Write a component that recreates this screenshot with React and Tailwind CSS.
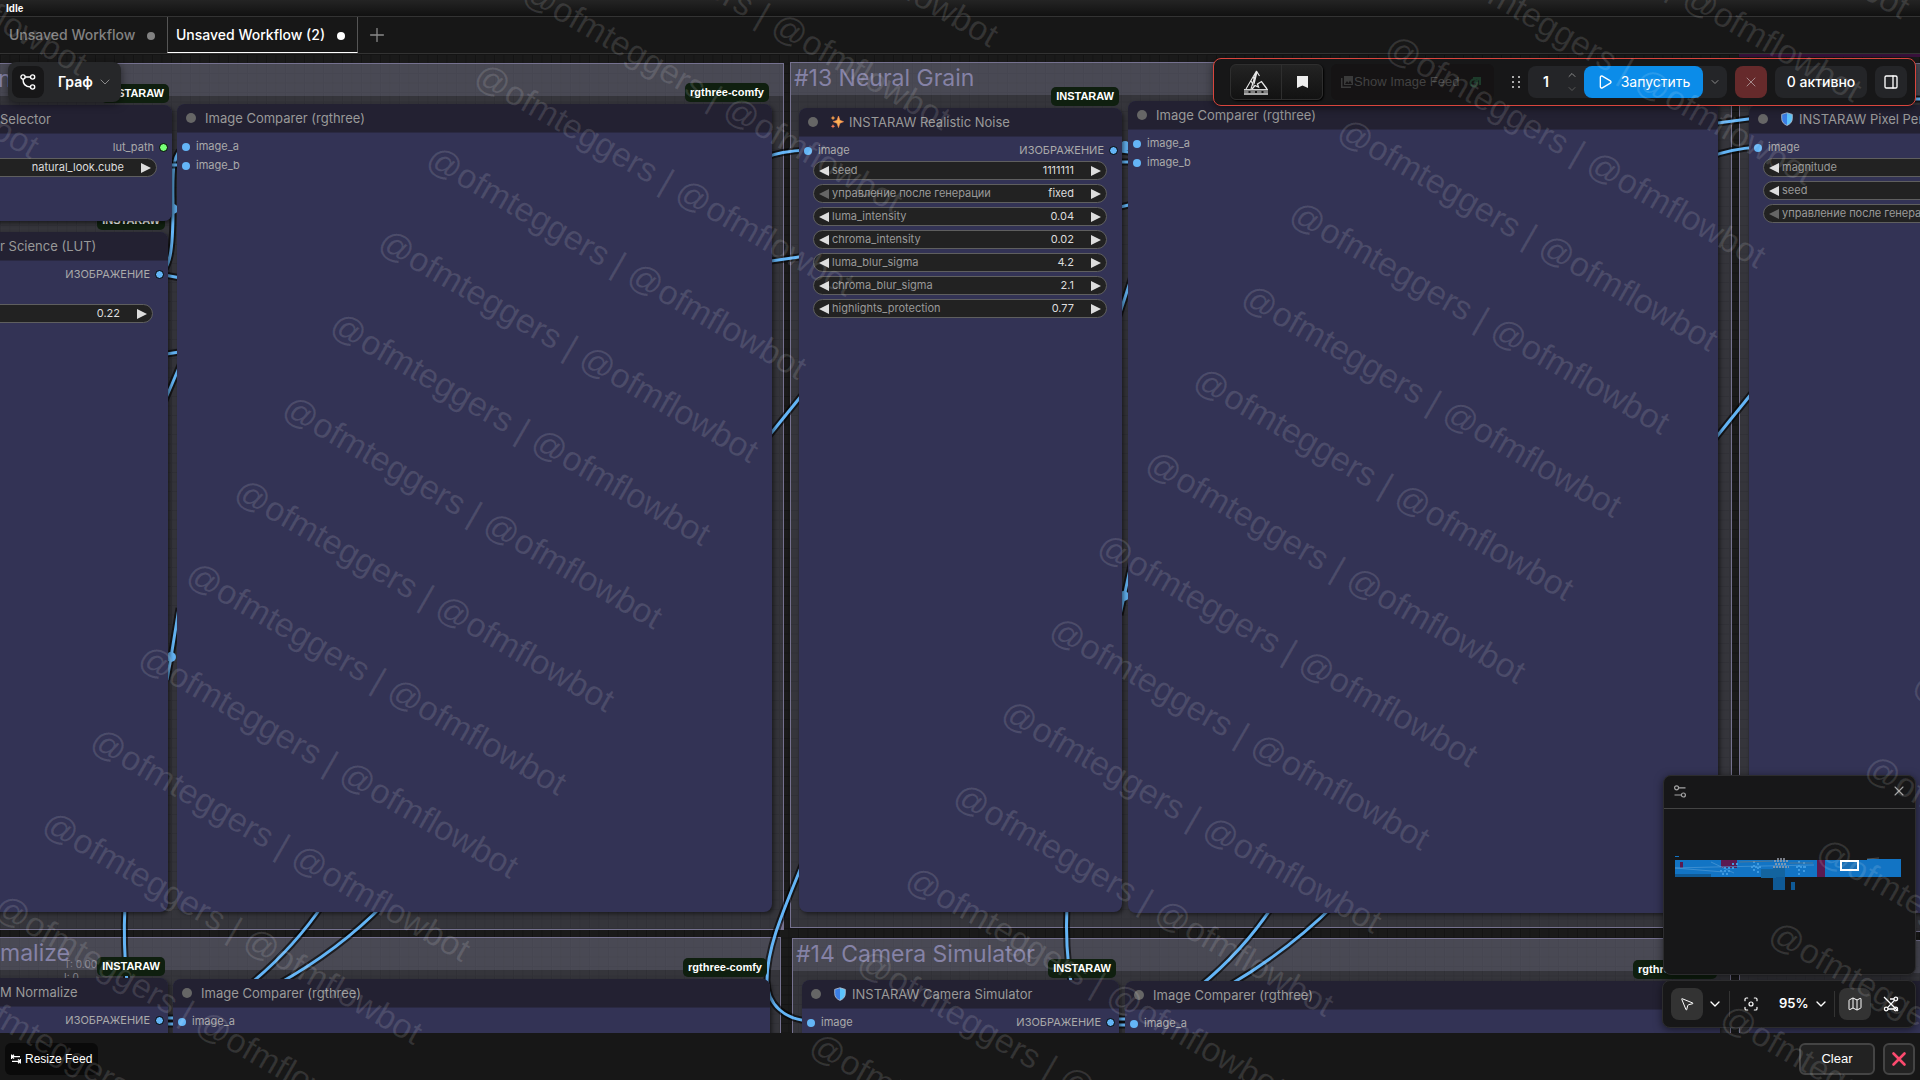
import React from 'react';
import {
  ChevronDown,
  ChevronUp,
  Focus,
  Map as MapIcon,
  MousePointer2,
  PanelRight,
  Play,
  Plus,
  X,
} from 'lucide-react';

const groups = [
  { title: 'nce', x: -6, y: 9, w: 790, h: 867 },
  { title: '#13 Neural Grain', x: 790, y: 8, w: 942, h: 866 },
  { title: '', x: 1739, y: 9, w: 260, h: 869 },
  { title: 'malize', x: -4, y: 883, w: 785, h: 300 },
  { title: '#14 Camera Simulator', x: 792, y: 884, w: 939, h: 300 },
  { title: '', x: 1739, y: 886, w: 260, h: 300 },
];

const nodes = [
  {
    id: 'lut', title: 'r Science (LUT)', x: -28, y: 178, w: 196, h: 680, badge: 'INSTARAW', slotRows: 2,
    outputs: [{ name: 'ИЗОБРАЖЕНИЕ' }],
    widgets: [{ name: '', value: '0.22' }],
  },
  {
    id: 'selector', title: 'Selector', x: -28, y: 51, w: 200, h: 116, badge: 'INSTARAW', slotRows: 1,
    outputs: [{ name: 'lut_path', green: true }],
    widgets: [{ name: '', value: 'natural_look.cube' }],
  },
  {
    id: 'comparer-1', title: 'Image Comparer (rgthree)', x: 177, y: 50, w: 595, h: 808, badge: 'rgthree-comfy', slotRows: 2,
    inputs: ['image_a', 'image_b'],
  },
  {
    id: 'noise', title: 'INSTARAW Realistic Noise', icon: 'sparkles', x: 799, y: 54, w: 323, h: 804, badge: 'INSTARAW', slotRows: 1,
    inputs: ['image'],
    outputs: [{ name: 'ИЗОБРАЖЕНИЕ' }],
    widgets: [
      { name: 'seed', value: '1111111' },
      { name: 'управление после генерации', value: 'fixed', first: true },
      { name: 'luma_intensity', value: '0.04' },
      { name: 'chroma_intensity', value: '0.02' },
      { name: 'luma_blur_sigma', value: '4.2' },
      { name: 'chroma_blur_sigma', value: '2.1' },
      { name: 'highlights_protection', value: '0.77' },
    ],
  },
  {
    id: 'comparer-2', title: 'Image Comparer (rgthree)', x: 1128, y: 47, w: 590, h: 812, slotRows: 2,
    inputs: ['image_a', 'image_b'],
  },
  {
    id: 'pixel', title: 'INSTARAW Pixel Perfect', icon: 'shield', x: 1749, y: 51, w: 323, h: 808, slotRows: 1,
    inputs: ['image'],
    widgets: [
      { name: 'magnitude', value: '' },
      { name: 'seed', value: '' },
      { name: 'управление после генерации', value: '', first: true },
    ],
  },
  {
    id: 'normalize', title: 'M Normalize', x: -28, y: 924, w: 196, h: 300, badge: 'INSTARAW', slotRows: 1,
    outputs: [{ name: 'ИЗОБРАЖЕНИЕ' }],
  },
  {
    id: 'comparer-3', title: 'Image Comparer (rgthree)', x: 173, y: 925, w: 597, h: 300, badge: 'rgthree-comfy', slotRows: 1,
    inputs: ['image_a'],
  },
  {
    id: 'camera', title: 'INSTARAW Camera Simulator', icon: 'shield', x: 802, y: 926, w: 317, h: 300, badge: 'INSTARAW', slotRows: 1,
    inputs: ['image'],
    outputs: [{ name: 'ИЗОБРАЖЕНИЕ' }],
  },
  {
    id: 'comparer-4', title: 'Image Comparer (rgthree)', x: 1125, y: 927, w: 595, h: 300, badge: 'rgthree-comfy', slotRows: 1,
    inputs: ['image_a'],
  },
  { id: 'tail', title: '', x: 1749, y: 927, w: 323, h: 300, slotRows: 1 },
];

const links = [
  'M159 274 C170 270 173 250 173 209 C173 180 170 152 186 146',
  'M159 165 H186',
  'M159 274 L186 279',
  'M160 355 L186 351',
  'M160 412 L184 356',
  'M179 608 L171 657 L167 680',
  'M764 158 Q780 151 808 150',
  'M764 262 L806 256',
  'M764 442 L806 390',
  'M806 855 C786 905 767 945 767 980 C767 1005 785 1020 811 1021',
  'M1112 150 L1137 153',
  'M1112 162 H1137',
  'M1112 209 L1137 203',
  'M1116 325 L1132 276',
  'M1132 560 L1120 615',
  'M1710 124 L1756 118',
  'M1710 157 Q1730 149 1758 147',
  'M1710 445 L1756 388',
  'M125 905 Q123 945 127 982',
  'M324 903 Q294 948 250 984',
  'M384 904 Q339 950 278 984',
  'M1067 905 Q1065 948 1071 982',
  'M1274 904 Q1244 950 1200 986',
  'M1335 904 Q1289 950 1228 986',
  'M160 1018 H180',
  'M160 1024 H180',
  'M1112 1019 H1132',
  'M1112 1025 H1132',
  'M1912 99 H1925',
];

const reroutes = [
  [173, 209],
  [171, 657],
  [1125, 146],
  [1124, 596],
];

const Links = () => (
  <svg className="absolute inset-0 w-full h-full" aria-hidden="true">
    <g transform="translate(0 -54)" fill="none">
      {links.map((d) => (
        <g key={d}>
          <path d={d} stroke="#000" strokeOpacity="0.6" strokeWidth="7" />
          <path d={d} stroke="#64b5f6" strokeWidth="3" />
        </g>
      ))}
      {reroutes.map(([x, y]) => (
        <circle key={y} cx={x} cy={y} r="5" fill="#64b5f6" />
      ))}
    </g>
  </svg>
);

const Grid = () => (
  <svg className="absolute inset-0 w-full h-full" aria-hidden="true">
    <defs>
      <pattern id="grid" width="9.5" height="9.5" patternUnits="userSpaceOnUse">
        <path d="M0 0.5 H9.5 M0.5 0 V9.5" stroke="#141414" strokeWidth="1" />
      </pattern>
    </defs>
    <rect width="100%" height="100%" fill="url(#grid)" />
  </svg>
);

const Group = ({ title, x, y, w, h }) => (
  <section
    className="absolute border border-[#75718f] bg-[#8886a0]/25"
    style={{ left: x, top: y, width: w, height: h }}
  >
    <h2 className="h-8 pl-[3px] bg-[#8886a0]/25 font-normal text-[23px] leading-[30px] text-[#8582a6] whitespace-nowrap">
      {title}
    </h2>
    <svg className="absolute right-0 bottom-0 w-2 h-2" viewBox="0 0 8 8">
      <path d="M8 0 V8 H0 Z" fill="#75718f" />
    </svg>
  </section>
);

const SparklesEmoji = () => (
  <svg className="w-[14px] h-[14px]" viewBox="0 0 14 14">
    <path d="M8.5 1 L9.9 5.3 L13.6 6.7 L9.9 8.2 L8.5 12.6 L7 8.2 L3.2 6.7 L7 5.3 Z" fill="#fbb254" stroke="#f98a55" strokeWidth="0.6" />
    <path d="M3 0.6 L3.7 2.3 L5.4 3 L3.7 3.7 L3 5.4 L2.3 3.7 L0.6 3 L2.3 2.3 Z" fill="#f9a04c" />
    <path d="M3 9 L3.6 10.6 L5.2 11.2 L3.6 11.9 L3 13.4 L2.4 11.9 L0.8 11.2 L2.4 10.6 Z" fill="#f57b57" />
  </svg>
);

const ShieldEmoji = () => (
  <svg className="w-[14px] h-[14px]" viewBox="0 0 14 14">
    <path d="M7 0.8 L12.3 2.4 V6.6 C12.3 10 10 12.3 7 13.4 Z" fill="#5cc3fb" />
    <path d="M7 0.8 L1.7 2.4 V6.6 C1.7 10 4 12.3 7 13.4 Z" fill="#3b7fe6" />
    <path d="M7 0.8 L12.3 2.4 V6.6 C12.3 10 10 12.3 7 13.4 C4 12.3 1.7 10 1.7 6.6 V2.4 Z" fill="none" stroke="#b8c6d8" strokeWidth="0.8" />
  </svg>
);

const Arrow = ({ left, dim }) => (
  <svg className={dim ? 'w-[10px] h-[10px] text-[#666]' : 'w-[10px] h-[10px] text-[#ddd]'} viewBox="0 0 10 10">
    <path d={left ? 'M10 0 V10 L0 5 Z' : 'M0 0 V10 L10 5 Z'} fill="currentColor" />
  </svg>
);

const Widget = ({ id, name, value, first }) => (
  <div className="h-[19px] px-[5px] flex items-center rounded-full bg-[#222] border border-[#5f5f5f] text-[11px]">
    {name && (
      <button aria-label={`${name} −`}>
        <Arrow left dim={first} />
      </button>
    )}
    <label htmlFor={id} className="pl-[3px] text-[#999] whitespace-nowrap">{name}</label>
    <input
      id={id}
      aria-label={name || value}
      defaultValue={value}
      className="flex-1 min-w-0 mr-[17px] bg-transparent text-right text-[#ddd] outline-none"
    />
    <button aria-label={`${name} +`}>
      <Arrow />
    </button>
  </div>
);

const Node = ({ id, title, icon, x, y, w, h, badge, slotRows, inputs = [], outputs = [], widgets = [] }) => (
  <article
    className="absolute rounded-lg bg-[#333355] shadow-[2px_2px_4px_rgba(0,0,0,0.5)]"
    style={{ left: x, top: y, width: w, height: h }}
  >
    {badge && (
      <span className="absolute -top-[21px] right-[3px] h-[19px] px-[5px] rounded-[5px] bg-[#0f1f0f] text-white font-['Liberation_Sans',sans-serif] text-[11px] leading-[19px] font-bold whitespace-nowrap">
        {badge}
      </span>
    )}
    <header className="h-[29px] pl-[9px] flex items-center rounded-t-lg bg-[#232132] border-b border-[#2a2942] text-[#999] text-[13px]">
      <span className="w-[10px] h-[10px] mr-[9px] shrink-0 rounded-full bg-[#666]"></span>
      {icon && (
        <span className="ml-[3px] mr-[5px]">
          {icon === 'sparkles' ? <SparklesEmoji /> : <ShieldEmoji />}
        </span>
      )}
      <h3 className="pt-[2px] whitespace-nowrap">{title}</h3>
    </header>
    <div className={slotRows === 2 ? 'h-[43px] pt-1 flex justify-between text-[11px] leading-[19px] text-[#aaa]' : 'h-6 pt-1 flex justify-between text-[11px] leading-[19px] text-[#aaa]'}>
      <ul className="pl-[5px]">
        {inputs.map((name) => (
          <li key={name} className="flex items-center gap-[6px]">
            <span className="w-2 h-2 rounded-full bg-[#64b5f6]"></span>
            {name}
          </li>
        ))}
      </ul>
      <ul className="pr-1">
        {outputs.map(({ name, green }) => (
          <li key={name} className="flex items-center gap-[5px]">
            {name}
            <span className={green ? 'w-[9px] h-[9px] rounded-full border border-black bg-[#77ff77]' : 'w-[9px] h-[9px] rounded-full border border-black bg-[#64b5f6]'}></span>
          </li>
        ))}
      </ul>
    </div>
    <div className="pl-[14px] pr-[15px] flex flex-col gap-1">
      {widgets.map((widget, i) => (
        <Widget key={i} id={`${id}-${i}`} {...widget} />
      ))}
    </div>
  </article>
);

const WorkflowIcon = () => (
  <svg className="w-4 h-4" viewBox="0 0 16 16" fill="none" stroke="currentColor" strokeWidth="1.4">
    <circle cx="3" cy="3" r="2.1" />
    <circle cx="12.6" cy="3" r="2.1" />
    <circle cx="12.6" cy="13" r="2.1" />
    <path d="M5.1 3 H10.5 M3 5.1 C3 10 5 13 10.5 13" />
  </svg>
);

const GraphMenu = () => (
  <div className="absolute left-2 top-2 h-10 p-1 flex items-center rounded-lg bg-[#262729] text-white shadow-[0_2px_8px_rgba(0,0,0,0.5)]">
    <button aria-label="Workflow" className="w-8 h-8 flex items-center justify-center rounded-lg bg-[#171718]">
      <WorkflowIcon />
    </button>
    <button className="pl-[14px] pr-1 flex items-center gap-1 text-sm font-semibold">
      Граф
      <ChevronDown className="w-4 h-4 text-[#8a8a8a]" strokeWidth={1.5} />
    </button>
  </div>
);

const CraneIcon = () => (
  <svg className="w-6 h-[25px]" viewBox="0 0 24 25" fill="none" stroke="#e8e8e8">
    <path d="M12.5 1 L2 19 M12.5 1 L7 19 M12.5 1 L15.5 6 M9.5 7 L10.5 12 M7 11 L9.5 15.5 M13 2 L10 14" strokeWidth="1.1" />
    <path d="M8 19 L11 15.5 L14.5 17 L13.5 14 L17.5 11.5 L23 19" strokeWidth="1.3" />
    <path d="M0 19.8 H24" strokeWidth="1.4" />
    <path d="M0 22 H4.5 M6.5 22 H11 M13 22 H17.5 M19.5 22 H24" strokeWidth="1.2" />
    <path d="M0 24 H24" strokeWidth="1.4" />
  </svg>
);

const ActionBar = () => (
  <div className="absolute right-1 top-1 h-12 pl-4 pr-2 flex items-center rounded-lg border border-[#d9453d] bg-[#171718] text-white text-sm shadow-[0_2px_8px_rgba(0,0,0,0.5)]">
    <div className="h-9 flex rounded-md border border-[#2e2e2e] bg-linear-to-b from-[#232323] to-[#121212] shadow-[1px_1px_2px_#000]">
      <button aria-label="Crystools" className="w-[51px] flex items-center justify-center border-r border-[#2e2e2e]">
        <CraneIcon />
      </button>
      <button aria-label="Bookmark" className="w-10 flex items-center justify-center">
        <svg className="w-[11px] h-3" viewBox="0 0 11 12">
          <path d="M0 0 H11 V12 L5.5 9.6 L0 12 Z" fill="#eee" />
        </svg>
      </button>
    </div>
    <button className="w-[163px] h-9 ml-2 pl-[10px] flex items-center rounded-md bg-[#151314] font-['Liberation_Sans',sans-serif] text-[13px] text-[#424242] whitespace-nowrap">
      <svg className="w-3 h-3 mr-px shrink-0" viewBox="0 0 12 12" fill="#3a3a3a">
        <path d="M3 0 H12 V9 H3 Z M0 2 H1.5 V10.5 H10 V12 H0 Z" />
        <path d="M4 8 L6 5 L7.5 7 L9 4.5 L11 8 Z" fill="#151314" />
      </svg>
      Show Image Feed
      <svg className="w-3 h-3 ml-[9px] shrink-0" viewBox="0 0 12 12" fill="none" stroke="#1d3a2a" strokeWidth="2">
        <circle cx="5" cy="7" r="3.5" />
        <path d="M4 2 H11 V9 M5 7 L11 2" />
      </svg>
    </button>
    <svg className="w-2 h-3 ml-[18px] mr-2" viewBox="0 0 8 12" fill="#aaa">
      <path d="M0 0h2v2H0zM6 0h2v2H6zM0 5h2v2H0zM6 5h2v2H6zM0 10h2v2H0zM6 10h2v2H6z" />
    </svg>
    <div className="h-8 flex items-center rounded-lg bg-[#242528]">
      <input
        aria-label="Batch count"
        defaultValue="1"
        className="w-9 text-center font-semibold bg-transparent outline-none"
      />
      <div className="w-5 pr-1 flex flex-col items-center gap-[2px] text-[#8a8a8a]">
        <button aria-label="Increase"><ChevronUp className="w-3 h-3" strokeWidth={2} /></button>
        <button aria-label="Decrease"><ChevronDown className="w-3 h-3 text-[#5a5a5a]" strokeWidth={2} /></button>
      </div>
      <button className="w-[119px] h-8 flex items-center justify-center gap-2 rounded-lg bg-[#0b8ce9] whitespace-nowrap">
        <Play className="w-4 h-4" strokeWidth={2} />
        Запустить
      </button>
      <button aria-label="Queue mode" className="w-6 flex justify-center">
        <ChevronDown className="w-3 h-3 text-[#8a8a8a]" strokeWidth={2} />
      </button>
    </div>
    <button aria-label="Cancel" className="w-8 h-8 ml-2 flex items-center justify-center rounded-lg bg-[#662a2b]">
      <X className="w-4 h-4 text-[#a58a8b]" strokeWidth={1.5} />
    </button>
    <button className="w-[92px] h-8 ml-2 rounded-lg bg-[#242528] font-medium whitespace-nowrap">0 активно</button>
    <button aria-label="Toggle panel" className="w-8 h-8 ml-2 flex items-center justify-center rounded-lg bg-[#242528]">
      <PanelRight className="w-4 h-4" strokeWidth={2} />
    </button>
  </div>
);

const MiniMap = () => (
  <div className="w-[253px] h-[200px] rounded-lg border border-[#2c2c2e] bg-[#171718] shadow-[0_2px_8px_rgba(0,0,0,0.5)]">
    <div className="h-[33px] pl-[10px] pr-2 pb-[2px] flex items-center justify-between border-b border-[#444] text-[#a5a5a5]">
      <button aria-label="Minimap options">
        <svg className="w-3 h-[13px]" viewBox="0 0 12 13" fill="none" stroke="currentColor" strokeWidth="1.2">
          <circle cx="2.6" cy="2.8" r="2" />
          <circle cx="9.4" cy="10" r="2" />
          <path d="M4.6 2.8 H11.5 M0.5 10 H7.4" />
        </svg>
      </button>
      <button aria-label="Close minimap"><X className="w-4 h-4" strokeWidth={1.6} /></button>
    </div>
    <svg className="w-full h-[165px]" viewBox="0 2 251 165">
      <path d="M11 49h4v1h-4z M11 53h192v17H11z M203 52h34v18h-34z" fill="#1274c4" />
      <path d="M11 67h36v3H11z M109 68h12v15h-12z M127 75h4v8h-4z" fill="#0f5a96" />
      <path d="M97 62h15v9H97z M109 61h12v9h-12z" fill="#13649f" />
      <path d="M16 55h3v6h-3z M57 53h16v8H57z M153 53h8v17h-8z" fill="#5b1a50" />
      <path d="M11 61 L50 60 L150 58 M47 55 L70 66 M11 61 L60 65" stroke="#4f9ad6" strokeWidth="0.7" fill="none" />
      <path d="M56 64h10 M58 67h8 M60 61h10 M68 57h6 M90 54v12 M94 56v10 M87 60h12 M135 54v14 M140 55v12 M132 60h12" stroke="#3f9ae0" strokeWidth="2" strokeDasharray="2 2" />
      <path d="M110 54h14 M111 57h12 M109 60h16 M113 52h8" stroke="#9aa0aa" strokeWidth="1.6" strokeDasharray="2 1" />
      <path d="M125 56h24 M203 52l12 -1 M75 55l34 -1" stroke="#777" strokeWidth="0.6" />
      <rect x="177" y="54" width="17" height="9" fill="#1a6fb5" stroke="#fff" strokeWidth="2" />
    </svg>
  </div>
);

const CanvasControls = () => (
  <div className="w-[254px] h-12 px-2 flex items-center rounded-lg border border-[#2c2c2e] bg-[#171718] text-white shadow-[0_2px_8px_rgba(0,0,0,0.5)]">
    <button aria-label="Select" className="w-8 h-8 flex items-center justify-center rounded-lg bg-[#333]">
      <MousePointer2 className="w-4 h-4" strokeWidth={1.5} />
    </button>
    <button aria-label="Canvas mode" className="w-6 flex justify-center"><ChevronDown className="w-4 h-4" strokeWidth={2} /></button>
    <span className="w-px h-[26px] ml-[2px] bg-[#333]"></span>
    <button aria-label="Fit view" className="w-10 ml-px flex justify-center"><Focus className="w-4 h-4" strokeWidth={1.8} /></button>
    <button className="ml-2 flex items-center gap-1 text-[13px] font-semibold">
      95%
      <ChevronDown className="w-4 h-4" strokeWidth={2} />
    </button>
    <div className="ml-auto flex items-center gap-1">
      <span className="w-px h-[26px] bg-[#333]"></span>
      <button aria-label="Toggle minimap" className="w-8 h-8 flex items-center justify-center rounded-lg bg-[#333]">
        <MapIcon className="w-4 h-4" strokeWidth={1.5} />
      </button>
      <button aria-label="Toggle links" className="w-8 h-8 flex items-center justify-center">
        <svg className="w-4 h-4" viewBox="0 0 16 16" fill="none" stroke="currentColor" strokeWidth="1.3">
          <circle cx="12.8" cy="3" r="1.8" />
          <circle cx="3.2" cy="13" r="1.8" />
          <circle cx="12.8" cy="13" r="1.8" />
          <path d="M1 1 L15 15 M11.4 4.4 L4.6 11.6 M7 3 H11 M5 13 H11" />
        </svg>
      </button>
    </div>
  </div>
);

const Tabs = () => (
  <nav className="h-[38px] flex border-y border-[#333] bg-[#171717] text-sm font-medium">
    <button className="w-[167px] pl-[9px] pr-3 flex items-center justify-between text-[#828282]">
      Unsaved Workflow
      <span className="w-2 h-2 mt-[2px] rounded-full bg-[#828282]"></span>
    </button>
    <button className="w-[191px] pl-2 pr-3 flex items-center justify-between border-x border-x-[#555] border-b border-b-white text-white">
      Unsaved Workflow (2)
      <span className="w-2 h-2 mt-[2px] rounded-full bg-white"></span>
    </button>
    <button aria-label="New workflow" className="w-[38px] flex items-center justify-center text-[#8a8a8a]">
      <Plus className="w-[22px] h-[22px]" strokeWidth={1.4} />
    </button>
  </nav>
);

const FeedBar = () => (
  <footer className="h-[47px] pt-1 pl-[5px] pr-[5px] flex items-center justify-between bg-[#171717] text-white font-['Liberation_Sans',sans-serif]">
    <button className="h-8 px-[6px] flex items-center gap-1 rounded-md bg-[#0a0a0a] text-xs whitespace-nowrap">
      <svg className="w-[10px] h-[10px]" viewBox="0 0 10 10" fill="none" stroke="#fff" strokeWidth="1.2">
        <path d="M0.6 0.5 V5 M1 2.7 H9 M3 0.8 L1 2.7 L3 4.6 M9.4 5 V9.5 M1 7.3 H9 M7 5.4 L9 7.3 L7 9.2" />
      </svg>
      Resize Feed
    </button>
    <div className="flex gap-2">
      <button className="w-[76px] h-8 rounded-md border-2 border-[#444] bg-[#222] text-[13px]">Clear</button>
      <button aria-label="Close feed" className="w-8 h-8 flex items-center justify-center rounded-md border-2 border-[#444] bg-[#222]">
        <svg className="w-4 h-4" viewBox="0 0 16 16" stroke="#fb4a6e" strokeWidth="2.6" strokeLinecap="round">
          <path d="M2.5 2.5 L13.5 13.5 M13.5 2.5 L2.5 13.5" />
        </svg>
      </button>
    </div>
  </footer>
);

const Watermark = () => (
  <div className="absolute inset-0 overflow-hidden pointer-events-none select-none" aria-hidden="true">
    <div className="absolute left-[263px] -top-[1106px] grid grid-cols-[repeat(4,775px)] auto-rows-[96px] items-center origin-top-left rotate-30 font-['Liberation_Sans',sans-serif] text-[34px] leading-none text-white/12 whitespace-nowrap">
      {Array.from({ length: 88 }, (_, i) => (
        <span key={i}>@ofmteggers | @ofmflowbot</span>
      ))}
    </div>
  </div>
);

export default function App() {
  return (
    <div className="relative h-screen flex flex-col overflow-hidden bg-[#171717] font-['Inter',sans-serif]">
      <div className="h-4 pl-[6px] bg-linear-to-b from-[#242424] to-[#111] font-['Liberation_Sans',sans-serif] text-[10px] leading-[17px] font-bold text-white">
        Idle
      </div>
      <Tabs />

      {/* Canvas */}
      <main className="relative flex-1 min-h-0 overflow-hidden bg-[#1a1a1a]">
        <Grid />
        <div className="absolute left-[1739px] right-0 top-0 h-[3px] bg-[#3a123c]"></div>
        {groups.map((group, i) => (
          <Group key={i} {...group} />
        ))}
        <Links />
        <div className="absolute left-16 top-[904px] text-[10px] leading-[13px] text-[#85838f]">
          <p>T: 0.00s</p>
          <p>I: 0</p>
        </div>
        {nodes.map((node) => (
          <Node key={node.id} {...node} />
        ))}
        <GraphMenu />
        <ActionBar />
        <div className="absolute right-1 bottom-[5px] flex flex-col items-end gap-[5px]">
          <MiniMap />
          <CanvasControls />
        </div>
      </main>

      <FeedBar />
      <Watermark />
    </div>
  );
}
